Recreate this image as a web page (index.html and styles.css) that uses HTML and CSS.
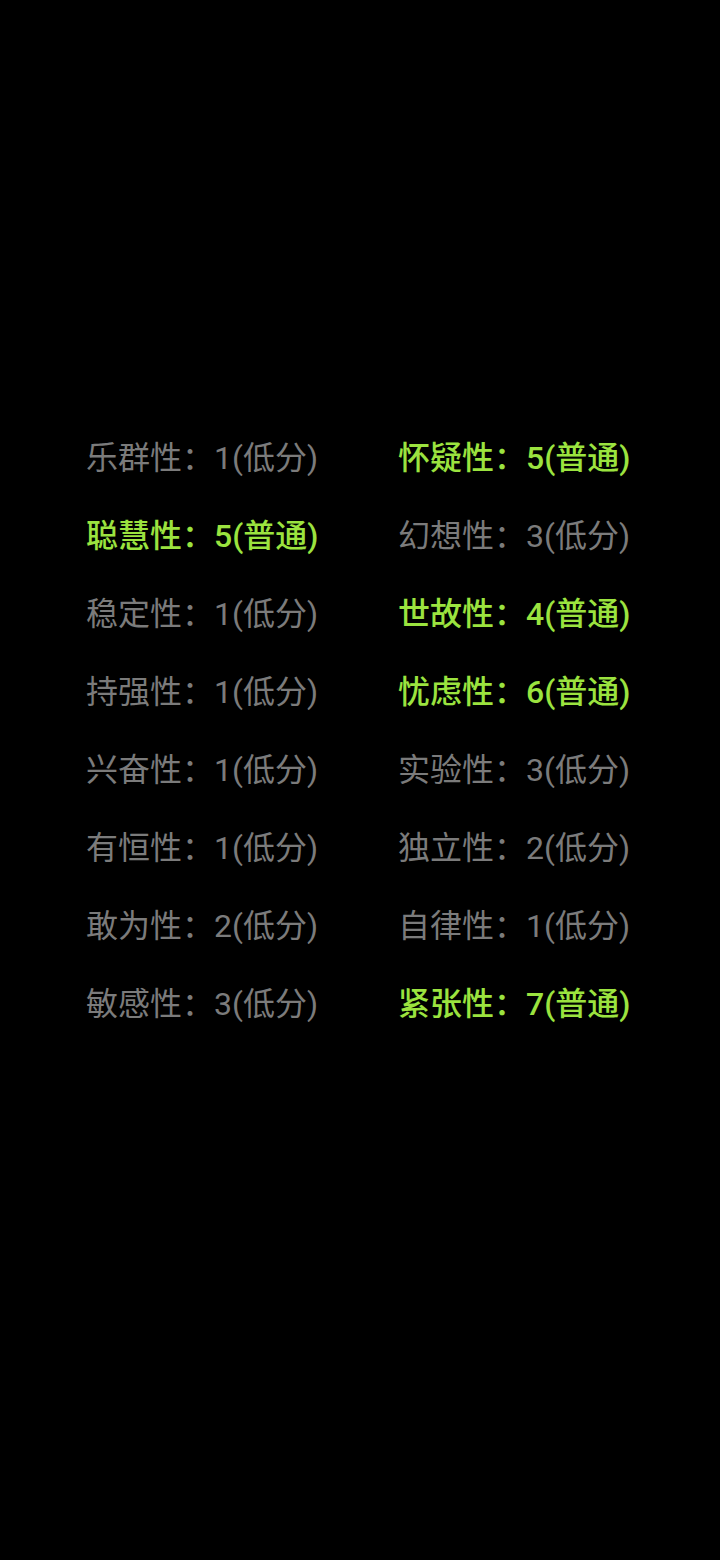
FILE: index.html
```html
<!DOCTYPE html>
<html lang="zh-CN">
<head>
    <meta charset="UTF-8">
    <meta name="viewport" content="width=device-width, initial-scale=1.0">
    <title>16PF 结果</title>
    <link rel="stylesheet" href="styles.css">
</head>
<body>
    <div class="result-grid">
        <div class="item">乐群性：1(低分)</div>
        <div class="item high">怀疑性：5(普通)</div>
        <div class="item high">聪慧性：5(普通)</div>
        <div class="item">幻想性：3(低分)</div>
        <div class="item">稳定性：1(低分)</div>
        <div class="item high">世故性：4(普通)</div>
        <div class="item">持强性：1(低分)</div>
        <div class="item high">忧虑性：6(普通)</div>
        <div class="item">兴奋性：1(低分)</div>
        <div class="item">实验性：3(低分)</div>
        <div class="item">有恒性：1(低分)</div>
        <div class="item">独立性：2(低分)</div>
        <div class="item">敢为性：2(低分)</div>
        <div class="item">自律性：1(低分)</div>
        <div class="item">敏感性：3(低分)</div>
        <div class="item high">紧张性：7(普通)</div>
    </div>
</body>
</html>
```

FILE: styles.css
```css
body {
    margin: 0;
    padding: 0;
    background-color: #000;
    font-family: Roboto, "Noto Sans CJK SC", sans-serif;
    width: 720px;
    height: 1560px;
}
.result-grid {
    display: grid;
    grid-template-columns: 312px 312px;
    padding: 419px 0 0 86px;
}
.item {
    font-size: 32px;
    line-height: 78px;
    height: 78px;
    color: #7b7b7b;
    white-space: nowrap;
}
.item.high {
    color: #9be33f;
    font-weight: 500;
}
```
